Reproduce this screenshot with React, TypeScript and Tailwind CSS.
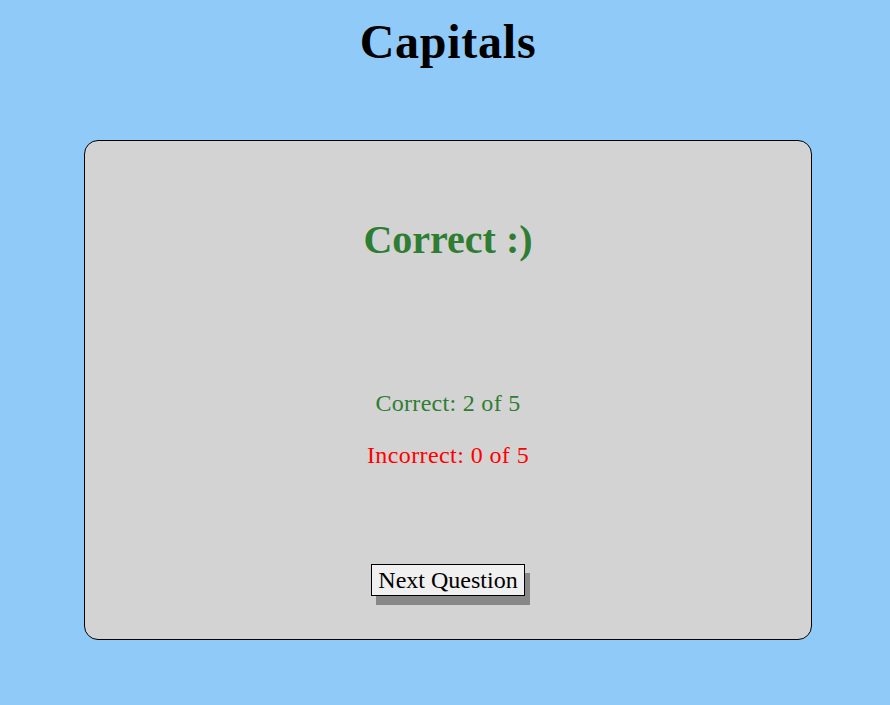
const serif = { fontFamily: '"Liberation Serif", "Times New Roman", serif' };

export default function App() {
  return (
    <div className="min-h-[705px] w-full bg-[#90caf9] text-black" style={serif}>
      <h1 className="pl-[6px] pt-[14px] text-center text-[48px] font-bold leading-[56px] tracking-[0.75px]">Capitals</h1>
      <div className="ml-[84px] mt-[70px] flex h-[500px] w-[728px] flex-col items-center rounded-[14px] border border-black bg-[#d3d3d3]">
        <h2 className="mt-[76px] text-[40px] font-bold leading-[46px] text-[#2e7d32]">Correct :)</h2>
        <p className="mt-[126px] text-[24px] leading-[28px] tracking-[0.3px] text-[#2e7d32]">Correct: 2 of 5</p>
        <p className="mt-[24px] text-[24px] leading-[28px] tracking-[0.4px] text-[#ff0000]">Incorrect: 0 of 5</p>
        <button className="mt-[95px] border border-black bg-[#f0f0f0] px-[6px] py-[1px] text-[24px] leading-[28px] shadow-[5px_9px_0_#888888]">
          Next Question
        </button>
      </div>
    </div>
  );
}
